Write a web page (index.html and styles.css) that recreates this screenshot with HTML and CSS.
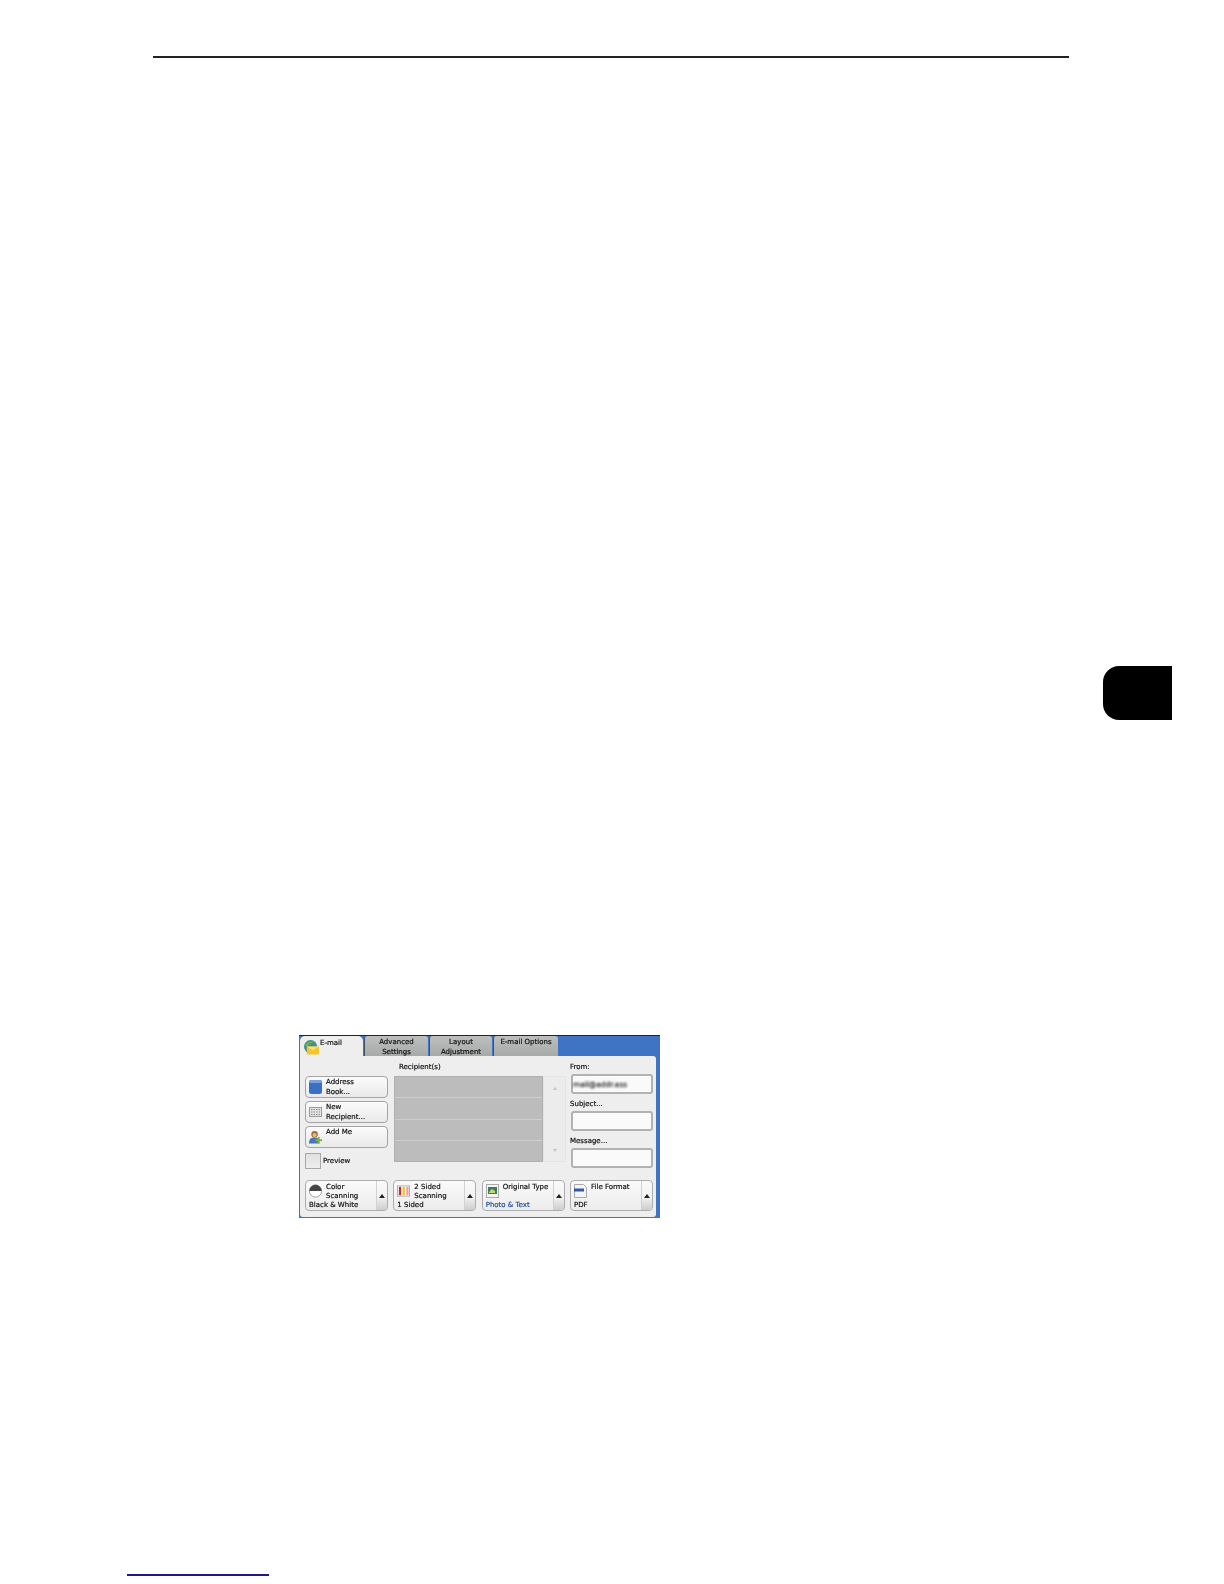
FILE: index.html
```html
<!DOCTYPE html>
<html lang="en">
<head>
<meta charset="utf-8">
<title>E-mail</title>
<link rel="stylesheet" href="styles.css">
</head>
<body>
<div class="page">
  <div class="top-rule"></div>
  <div class="side-tab"></div>
  <section class="panel">
    <div class="tabs">
      <div class="tab tab-active">
        <svg class="tab-icon" viewBox="0 0 18 16"><circle cx="8" cy="7" r="7" fill="#3f8f8a"/><path d="M1 6c2-4 8-6 12-4-3 0-7 2-8 5z" fill="#6fb04c"/><path d="M4 7h13v8.500H4z" fill="#f3c631"/><path d="M4 7l6.500 4L17 7" fill="#fbe07a"/></svg>
        <span>E-mail</span>
      </div>
      <div class="tab tab-w1">Advanced<br>Settings</div>
      <div class="tab tab-w2">Layout<br>Adjustment</div>
      <div class="tab tab-w3">E-mail Options</div>
    </div>
    <div class="body">
      <div class="main">
        <div class="col-left">
          <div class="btn">
            <svg class="btn-icon" viewBox="0 0 13 14"><rect x="0" y="0" width="13" height="14" rx="2.500" fill="#3b6fc4"/><rect x="0" y="0" width="13" height="3" rx="1.500" fill="#7d9fdc"/></svg>
            <span>Address<br>Book...</span>
          </div>
          <div class="btn">
            <svg class="btn-icon" viewBox="0 0 13 14"><rect x="0.500" y="2.500" width="12" height="9" fill="#e4e4e4" stroke="#9a9a9a"/><path d="M2 4.500h9M2 7h9M2 9.500h9" stroke="#8a8a8a" stroke-dasharray="1.500 1"/></svg>
            <span>New<br>Recipient...</span>
          </div>
          <div class="btn">
            <svg class="btn-icon" viewBox="0 0 14 14"><circle cx="6" cy="4" r="3.500" fill="#a8692f"/><circle cx="6" cy="4.800" r="2.200" fill="#e6b887"/><path d="M0 14c0-5 2-6.500 6-6.500s5 2 5 6.500z" fill="#4a74b4"/><path d="M9.500 7h2v2.500H14v2h-2.500V14h-2v-2.500H7v-2h2.500z" fill="#79b63a"/></svg>
            <span>Add Me</span>
          </div>
          <div class="preview"><span class="check"></span><span>Preview</span></div>
        </div>
        <div class="col-mid">
          <div class="label-mid">Recipient(s)</div>
          <div class="list-wrap">
            <div class="list">
              <div class="row"></div>
              <div class="row"></div>
              <div class="row"></div>
              <div class="row"></div>
            </div>
            <div class="scroll"><span class="arrow-up-faint"></span><span class="arrow-down-faint"></span></div>
          </div>
        </div>
        <div class="col-right">
          <div class="field-group">
            <div class="label label-first">From:</div>
            <div class="field"><span class="blurred">mail@addr.ess</span></div>
          </div>
          <div class="field-group">
            <div class="label">Subject...</div>
            <div class="field"></div>
          </div>
          <div class="field-group">
            <div class="label">Message...</div>
            <div class="field"></div>
          </div>
        </div>
      </div>
      <div class="bottom">
        <div class="opt">
          <div class="opt-text">
            <div class="opt-head">
              <svg class="opt-icon" viewBox="0 0 14 14"><circle cx="7" cy="7" r="6.600" fill="#fff" stroke="#777" stroke-width="0.700"/><path d="M0.400 7a6.600 6.600 0 0 1 13.200 0z" fill="#444"/></svg>
              <span>Color<br>Scanning</span>
            </div>
            <div class="opt-value">Black &amp; White</div>
          </div>
          <div class="opt-side"><span class="arrow-up"></span><span class="opt-thumb"></span></div>
        </div>
        <div class="opt">
          <div class="opt-text">
            <div class="opt-head">
              <svg class="opt-icon" viewBox="0 0 14 14"><rect x="0.500" y="1.500" width="13" height="11" fill="#fff" stroke="#aaa"/><rect x="2" y="2.500" width="2.500" height="9" fill="#b8322a"/><rect x="6" y="2.500" width="2.500" height="9" fill="#e8c23c"/><rect x="10" y="2.500" width="2.500" height="9" fill="#e8a0a0"/></svg>
              <span>2 Sided<br>Scanning</span>
            </div>
            <div class="opt-value">1 Sided</div>
          </div>
          <div class="opt-side"><span class="arrow-up"></span><span class="opt-thumb"></span></div>
        </div>
        <div class="opt">
          <div class="opt-text">
            <div class="opt-head">
              <svg class="opt-icon" viewBox="0 0 13 14"><rect x="0.500" y="0.500" width="12" height="13" fill="#f4f4f4" stroke="#aaa"/><rect x="2" y="3" width="9" height="7" fill="#3f7d5c"/><path d="M3 8l3-3 3 2v2H3z" fill="#c9d86a"/></svg>
              <span>Original Type</span>
            </div>
            <div class="opt-value value-blue">Photo &amp; Text</div>
          </div>
          <div class="opt-side"><span class="arrow-up"></span><span class="opt-thumb"></span></div>
        </div>
        <div class="opt">
          <div class="opt-text">
            <div class="opt-head">
              <svg class="opt-icon" viewBox="0 0 13 14"><path d="M0.500 0.500h9l3 3v10H0.500z" fill="#f4f4f4" stroke="#aaa"/><rect x="0" y="4.500" width="10" height="3" fill="#2f5aa8"/></svg>
              <span>File Format</span>
            </div>
            <div class="opt-value">PDF</div>
          </div>
          <div class="opt-side"><span class="arrow-up"></span><span class="opt-thumb"></span></div>
        </div>
      </div>
    </div>
  </section>
  <div class="foot-link"></div>
</div>
</body>
</html>
```
FILE: styles.css
```css
* { box-sizing: border-box; }
html, body { margin: 0; padding: 0; background: #fff; }
.page {
  width: 1224px;
  height: 1584px;
  overflow: hidden;
  padding-top: 56px;
  font-family: "DejaVu Sans", sans-serif;
  font-size: 7px;
  line-height: 9px;
  color: #111;
}
.top-rule { height: 2px; width: 916px; margin-left: 153px; background: #222; }
.side-tab {
  width: 69px;
  height: 54px;
  margin: 608px 0 0 1103px;
  background: #000;
  border-radius: 16px 0 0 16px;
}
.panel {
  width: 361px;
  height: 183px;
  margin: 315px 0 0 299px;
  padding: 0 4px 1px 1px;
  background: #3f73c4;
  border-top: 1px solid #223;
  display: flex;
  flex-direction: column;
  filter: blur(0.35px);
  -webkit-text-stroke: 0.2px #111;
}
.tabs { display: flex; height: 20px; gap: 1px; flex: none; }
.tab {
  height: 100%;
  background: linear-gradient(#bcbfbe, #a8aaaa);
  border-left: 1.500px solid #44506a;
  border-radius: 3px 3px 0 0;
  text-align: center;
  padding-top: 2px;
  line-height: 9.500px;
}
.tab-active {
  width: 63px;
  background: #eeeeee;
  border: 0;
  display: flex;
  gap: 0;
  align-items: flex-start;
  padding: 3px 0 0 3px;
  border-radius: 5px 5px 0 0;
}
.tab-icon { width: 17px; height: 15px; margin-top: 1px; flex: none; }
.tab-w1 { width: 64px; }
.tab-w2 { width: 63px; }
.tab-w3 { width: 65px; }
.body {
  flex: 1;
  background: #eeeeee;
  border-radius: 0 3px 3px 3px;
  padding: 0 3px 0 5px;
  display: flex;
  flex-direction: column;
}
.main { display: flex; height: 124px; flex: none; }
.col-left { width: 83px; margin-right: 6px; padding-top: 20px; display: flex; flex-direction: column; gap: 3px; }
.btn {
  height: 22px;
  background: linear-gradient(#fbfbfb, #e9e9e9);
  border: 1px solid #a4a4a4;
  border-radius: 4px;
  display: flex;
  align-items: flex-start;
  gap: 4px;
  padding: 1px 0 0 3px;
  line-height: 9.500px;
}
.btn-icon { width: 13px; height: 14px; flex: none; margin-top: 2px; }
.preview { display: flex; align-items: center; gap: 2px; margin-top: 2px; }
.check { width: 16px; height: 16px; background: linear-gradient(#e0e0e0, #eeeeee); border: 1px solid #a8a8a8; }
.col-mid { width: 172px; margin-right: 4px; }
.label-mid { height: 20px; padding: 7px 0 0 5px; }
.list-wrap { display: flex; height: 86px; }
.list {
  width: 149px;
  background: #bcbcbc;
  border: 1px solid #b0b0b0;
  display: flex;
  flex-direction: column;
}
.row { flex: 1; border-bottom: 1px solid #cdcdcd; }
.row:last-child { border-bottom: 0; }
.scroll {
  flex: 1;
  background: #ececec;
  border: 1px solid #e4e4e4;
  display: flex;
  flex-direction: column;
  justify-content: space-between;
  align-items: center;
  padding: 10px 0 9px;
}
.arrow-up-faint, .arrow-down-faint { width: 0; height: 0; border-left: 2px solid transparent; border-right: 2px solid transparent; }
.arrow-up-faint { border-bottom: 3px solid #c4c4c4; }
.arrow-down-faint { border-top: 3px solid #c4c4c4; }
.col-right { width: 83px; display: flex; flex-direction: column; }
.field-group { display: flex; flex-direction: column; }
.label { height: 17px; padding-top: 6px; }
.label-first { height: 18px; padding-top: 7px; }
.field {
  height: 20px;
  margin-left: 1px;
  background: #fafafa;
  border: 2px solid #b2b2b2;
  border-radius: 3px;
  padding: 4px 0 0 0;
}
.blurred { display: inline-block; font-size: 7.400px; color: #333; filter: blur(1px); }
.bottom { display: grid; grid-template-columns: repeat(4, 1fr); gap: 5.330px; }
.opt {
  height: 31px;
  background: linear-gradient(#fafafa, #ececec);
  border: 1px solid #adadad;
  border-radius: 4px;
  display: flex;
}
.opt-text { flex: 1; padding: 2px 0 0 3px; display: flex; flex-direction: column; white-space: nowrap; min-width: 0; }
.opt-head { display: flex; gap: 4px; height: 18px; }
.opt-icon { width: 13px; height: 14px; flex: none; margin-top: 1px; }
.value-blue { color: #1f4e9c; -webkit-text-stroke-color: #1f4e9c; }
.opt-side {
  width: 11px;
  flex: none;
  border-left: 1px solid #d2d2d2;
  display: flex;
  flex-direction: column;
  align-items: center;
  justify-content: flex-end;
}
.arrow-up { width: 0; height: 0; border-left: 3.500px solid transparent; border-right: 3.500px solid transparent; border-bottom: 4px solid #222; margin-bottom: 1px; }
.opt-thumb { width: 10px; height: 11px; background: linear-gradient(#ececec, #cdcdcd); border-radius: 0 0 3px 0; }
.foot-link { width: 142px; height: 2px; margin: 356px 0 0 127px; background: #1a1a8c; }
```
